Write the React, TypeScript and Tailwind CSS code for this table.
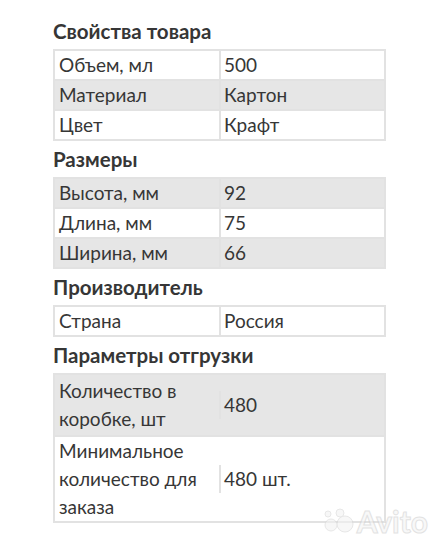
import React from "react";

type Row = { label: string; value: string; gray?: boolean; pad?: boolean };

const sections: { title: string; rows: Row[] }[] = [
  {
    title: "Свойства товара",
    rows: [
      { label: "Объем, мл", value: "500" },
      { label: "Материал", value: "Картон", gray: true },
      { label: "Цвет", value: "Крафт" },
    ],
  },
  {
    title: "Размеры",
    rows: [
      { label: "Высота, мм", value: "92", gray: true },
      { label: "Длина, мм", value: "75" },
      { label: "Ширина, мм", value: "66", gray: true },
    ],
  },
  {
    title: "Производитель",
    rows: [{ label: "Страна", value: "Россия" }],
  },
  {
    title: "Параметры отгрузки",
    rows: [
      { label: "Количество в коробке, шт", value: "480", gray: true, pad: true },
      { label: "Минимальное количество для заказа", value: "480 шт." },
    ],
  },
];

function SpecTable({ rows }: { rows: Row[] }) {
  return (
    <div className="border-2 border-[#e2e2e2]">
      {rows.map((row, i) => (
        <div
          key={row.label}
          className={`flex items-center ${row.gray ? "bg-[#e6e6e6]" : "bg-white"} ${
            i > 0 ? "border-t-2 border-[#e2e2e2]" : ""
          } ${row.pad ? "py-[2px]" : ""}`}
        >
          <div className="w-[164px] shrink-0 pl-[4px] pr-2 leading-[28px] min-h-[28px]">
            {row.label}
          </div>
          <div className="flex-1 border-l-2 border-[#e2e2e2] pl-[3px] leading-[28px] min-h-[28px]">
            {row.value}
          </div>
        </div>
      ))}
    </div>
  );
}

export default function App() {
  return (
    <div
      className="relative w-[438px] h-[540px] overflow-hidden bg-white text-[#363636]"
      style={{ fontFamily: "Lato, 'Open Sans', sans-serif" }}
    >
      <div className="w-[333px] ml-[53px] pt-[19px] text-[19px]">
        {sections.map((s) => (
          <section key={s.title} className="mb-[6px]">
            <h2 className="text-[20.5px] font-bold leading-[24px] mb-[6px]">
              {s.title}
            </h2>
            <SpecTable rows={s.rows} />
          </section>
        ))}
      </div>

      {/* Avito watermark */}
      <div className="absolute right-[10px] bottom-[4px] flex items-center gap-[2px] opacity-60">
        <svg width="34" height="26" viewBox="0 0 34 26">
          <circle cx="24" cy="16" r="8" fill="#f2f2f2" stroke="#d8d8d8" strokeWidth="1" />
          <circle cx="10" cy="17" r="6" fill="#f2f2f2" stroke="#d8d8d8" strokeWidth="1" />
          <circle cx="19" cy="5" r="4" fill="#f2f2f2" stroke="#d8d8d8" strokeWidth="1" />
          <circle cx="7" cy="6" r="3" fill="#f2f2f2" stroke="#d8d8d8" strokeWidth="1" />
        </svg>
        <span
          className="text-[30px] font-bold leading-none text-[#f4f4f4]"
          style={{ WebkitTextStroke: "1px #d0d0d0" }}
        >
          Avito
        </span>
      </div>
    </div>
  );
}
